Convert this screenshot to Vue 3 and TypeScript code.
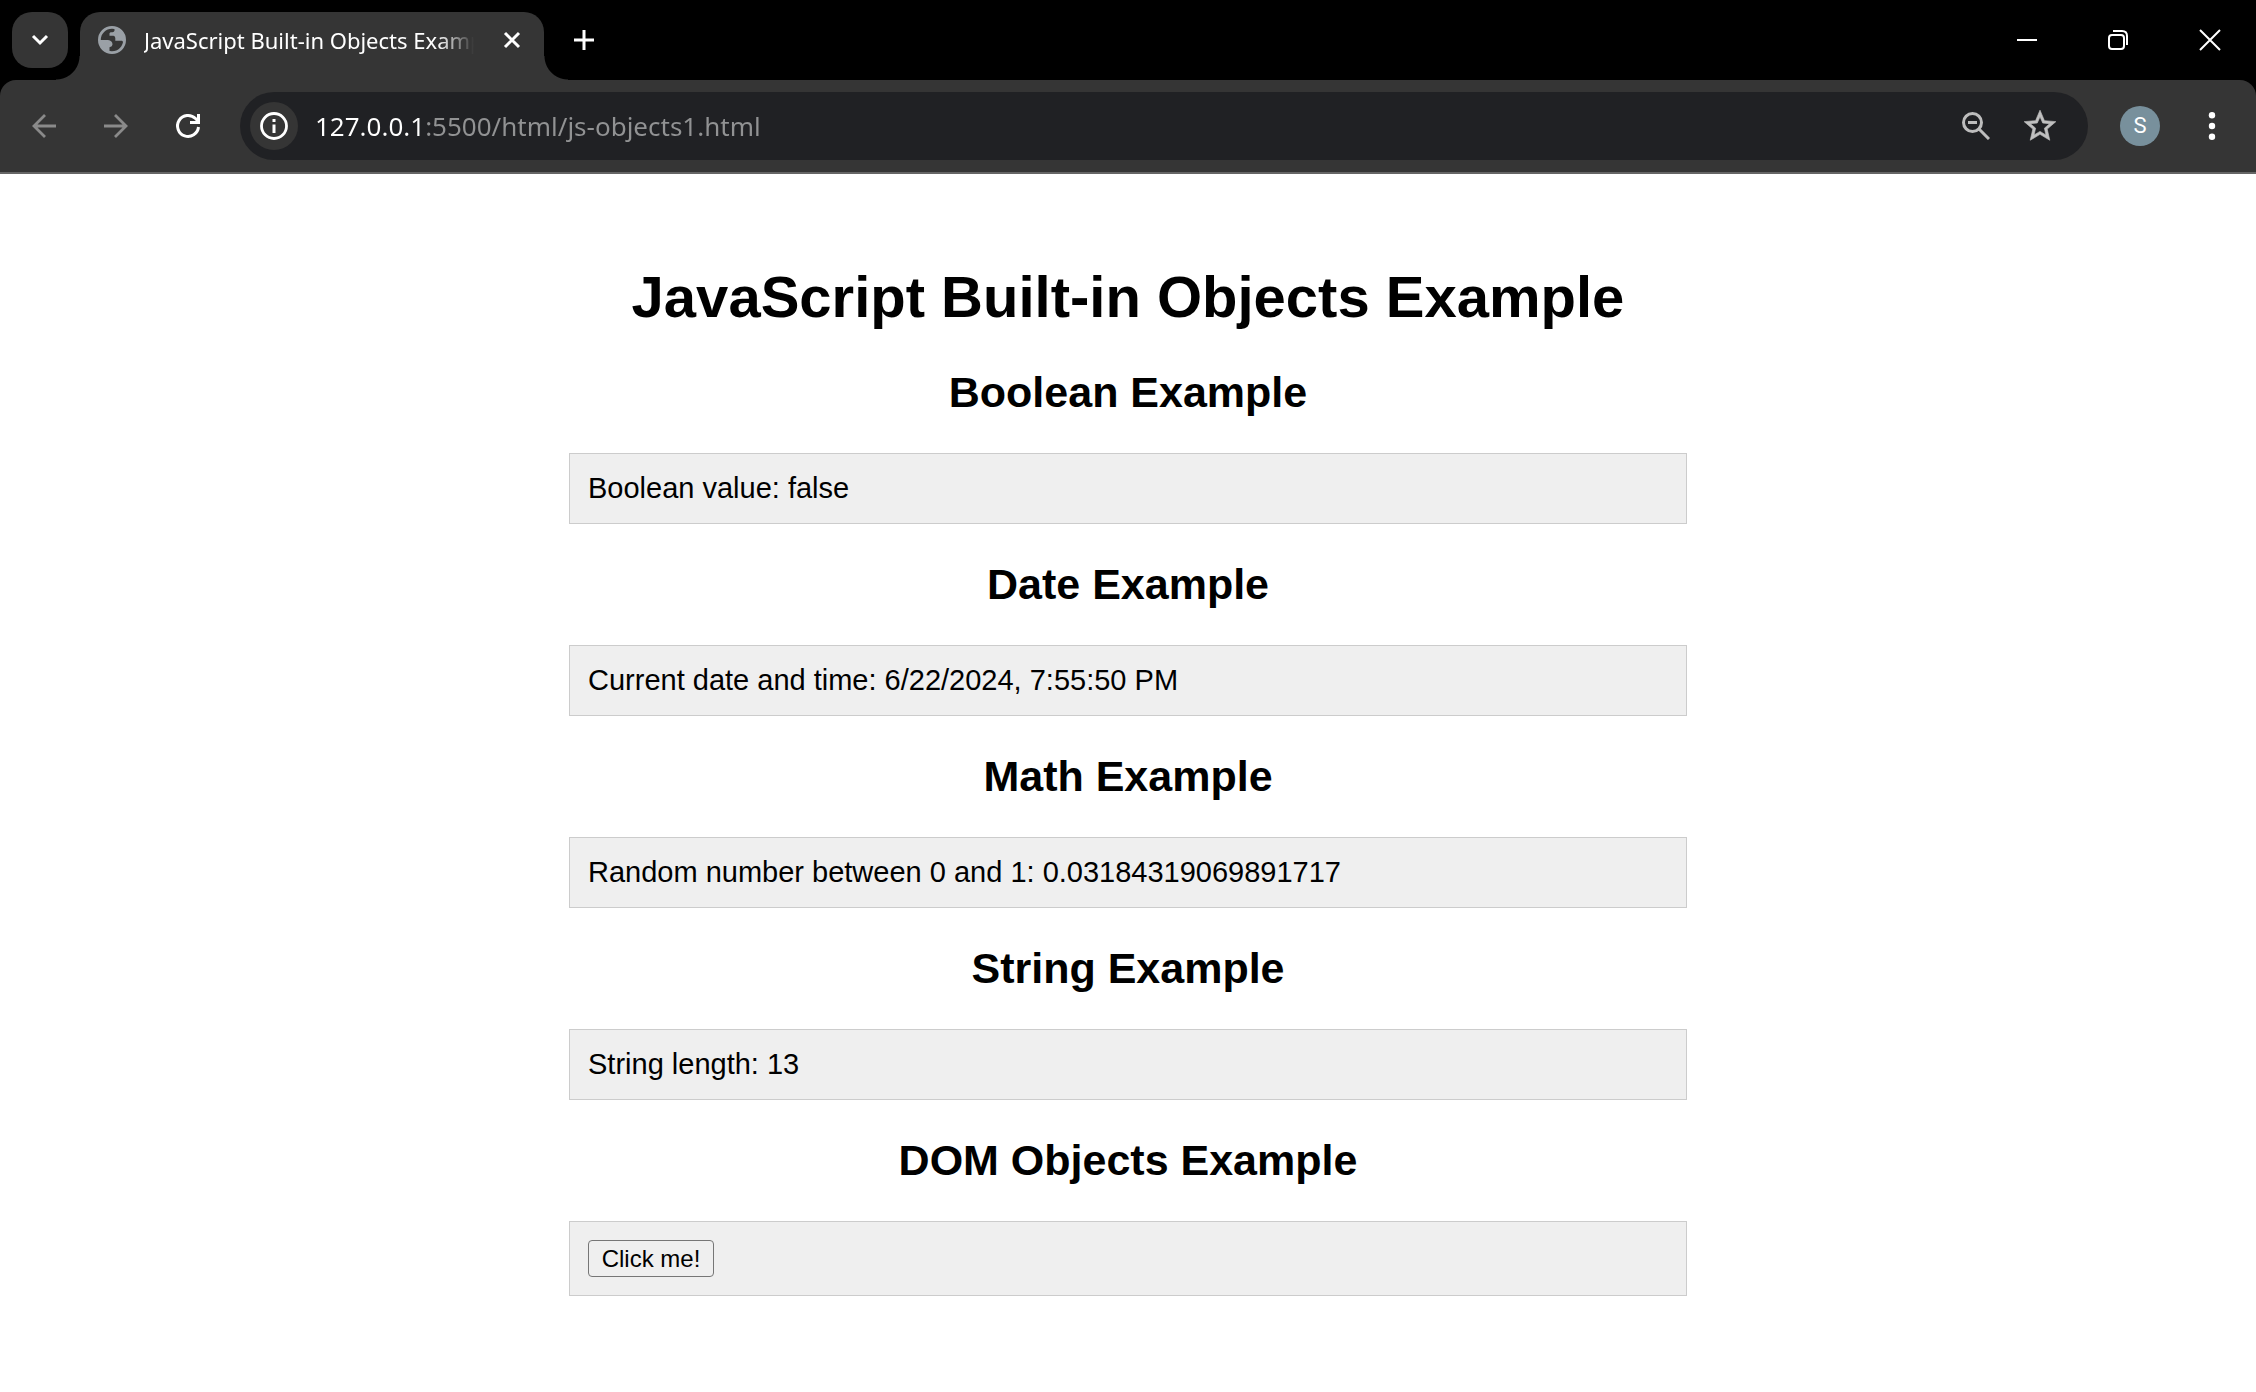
<script setup lang="ts">
import { ref } from 'vue'

interface Example {
  title: string
  text?: string
  action?: string
}

const pageTitle = 'JavaScript Built-in Objects Example'
const address = ref('127.0.0.1:5500/html/js-objects1.html')

const examples: Example[] = [
  { title: 'Boolean Example', text: 'Boolean value: false' },
  { title: 'Date Example', text: 'Current date and time: 6/22/2024, 7:55:50 PM' },
  { title: 'Math Example', text: 'Random number between 0 and 1: 0.03184319069891717' },
  { title: 'String Example', text: 'String length: 13' },
  { title: 'DOM Objects Example', action: 'Click me!' },
]
</script>

<template>
  <div class="browser">
    <header class="tab-strip">
      <button class="tab-search" aria-label="Search tabs">
        <svg width="24" height="24" viewBox="0 0 24 24"><path d="M5 8l7 7 7-7" fill="none" stroke="#fff" stroke-width="3" /></svg>
      </button>
      <div class="tab">
        <svg class="favicon" width="28" height="28" viewBox="0 0 28 28">
          <circle cx="14" cy="14" r="12.6" fill="none" stroke="#9aa0a6" stroke-width="2.8" />
          <path d="M1 14h9q4.500 .5 4.500 4.500q0 2-3 2.700V26.500A13 13 0 0 1 1 14z" fill="#9aa0a6" />
          <path d="M16.500 2v2.700q-.4 1.300-2 1.500h-2l-1 1v2.500h4q1.800 .3 1.800 2.300v2.700h6.700l1 1h2A13 13 0 0 0 16.500 2z" fill="#9aa0a6" />
        </svg>
        <span class="tab-title">{{ pageTitle }}</span>
        <button class="icon-button" aria-label="Close tab">
          <svg width="24" height="24" viewBox="0 0 24 24"><path d="M5 5l14 14M19 5L5 19" stroke="#fff" stroke-width="3" /></svg>
        </button>
      </div>
      <button class="icon-button new-tab" aria-label="New tab">
        <svg width="24" height="24" viewBox="0 0 24 24"><path d="M12 2v20M2 12h20" stroke="#fff" stroke-width="3" /></svg>
      </button>
      <div class="window-controls">
        <button class="window-button" aria-label="Minimize">
          <svg width="24" height="24" viewBox="0 0 24 24"><path d="M3 12h20" stroke="#fff" stroke-width="2" /></svg>
        </button>
        <button class="window-button" aria-label="Restore">
          <svg width="24" height="24" viewBox="0 0 24 24" fill="none" stroke="#fff" stroke-width="2">
            <rect x="3" y="7" width="15" height="14" rx="3" />
            <path d="M7 3h9q5 0 5 5v9" />
          </svg>
        </button>
        <button class="window-button" aria-label="Close">
          <svg width="24" height="24" viewBox="0 0 24 24"><path d="M2 2l20 20M22 2L2 22" stroke="#fff" stroke-width="2" /></svg>
        </button>
      </div>
    </header>

    <nav class="toolbar" aria-label="Browser toolbar">
      <div class="nav-buttons">
        <button class="icon-button" aria-label="Back">
          <svg width="28" height="28" viewBox="0 0 28 28"><path d="M26 14H4M15 3L4 14l11 11" fill="none" stroke="#8a8a8a" stroke-width="2.800" /></svg>
        </button>
        <button class="icon-button" aria-label="Forward">
          <svg width="28" height="28" viewBox="0 0 28 28"><path d="M2 14h22M13 3l11 11-11 11" fill="none" stroke="#8a8a8a" stroke-width="2.800" /></svg>
        </button>
        <button class="icon-button" aria-label="Reload">
          <svg width="28" height="28" viewBox="0 0 28 28">
            <path d="M24.500 15A10.500 10.500 0 1 1 21.500 6.500L24 9M24.500 2v8.500H16" fill="none" stroke="#fff" stroke-width="3" />
          </svg>
        </button>
      </div>
      <div class="address-bar">
        <button class="site-info" aria-label="View site information">
          <svg width="28" height="28" viewBox="0 0 28 28">
            <circle cx="14" cy="14" r="12.500" fill="none" stroke="#fff" stroke-width="2.800" />
            <path d="M14 12.500V21M14 7v3" stroke="#fff" stroke-width="3" />
          </svg>
        </button>
        <input v-model="address" class="address-input" type="text" aria-label="Address" spellcheck="false" />
        <button class="icon-button" aria-label="Zoom">
          <svg width="28" height="28" viewBox="0 0 28 28" fill="none" stroke="#bdbdbd" stroke-width="3">
            <circle cx="10.500" cy="10.500" r="9" />
            <path d="M17 17l10 10M6 10.500h9" />
          </svg>
        </button>
        <button class="icon-button" aria-label="Bookmark this tab">
          <svg width="38" height="38" viewBox="0 0 24 24">
            <path d="M22 9.240l-7.190-.62L12 2 9.190 8.630 2 9.240l5.460 4.730L5.820 21 12 17.270 18.180 21l-1.630-7.030L22 9.240zM12 15.400l-3.760 2.270 1-4.280-3.320-2.880 4.380-.38L12 6.100l1.710 4.040 4.380.38-3.320 2.880 1 4.280L12 15.400z" fill="#c0c0c0" stroke="#c0c0c0" stroke-width=".4" />
          </svg>
        </button>
      </div>
      <button class="avatar" aria-label="Profile">S</button>
      <button class="icon-button" aria-label="Menu">
        <svg width="28" height="28" viewBox="0 0 28 28" fill="#fff">
          <circle cx="14" cy="3.200" r="3.200" /><circle cx="14" cy="14" r="3.200" /><circle cx="14" cy="24.800" r="3.200" />
        </svg>
      </button>
    </nav>

    <main class="page">
      <h1>{{ pageTitle }}</h1>
      <section v-for="example in examples" :key="example.title">
        <h2>{{ example.title }}</h2>
        <div class="output">
          <button v-if="example.action" class="action">{{ example.action }}</button>
          <template v-else>{{ example.text }}</template>
        </div>
      </section>
    </main>
  </div>
</template>

<style>
body {
  margin: 0;
  background: #fff;
}
</style>

<style scoped>
.browser {
  font-family: "Noto Sans", sans-serif;
}

button {
  margin: 0;
  padding: 0;
  border: 0;
  background: none;
}

svg {
  display: block;
  flex: none;
}

.tab-strip {
  display: flex;
  height: 80px;
  box-sizing: border-box;
  padding: 12px 0 0 12px;
  background: #000;
}

.tab-search {
  display: flex;
  align-items: center;
  justify-content: center;
  width: 56px;
  height: 56px;
  border-radius: 20px;
  background: #353535;
}

.icon-button {
  display: flex;
  flex: none;
  align-items: center;
  justify-content: center;
  width: 40px;
  height: 40px;
}

.tab {
  position: relative;
  display: flex;
  align-items: center;
  width: 464px;
  height: 68px;
  box-sizing: border-box;
  margin-left: 12px;
  padding: 0 12px 12px 18px;
  border-radius: 20px 20px 0 0;
  background: #353535;
}

/* Concave feet that join the active tab to the toolbar. */
.tab::before,
.tab::after {
  content: "";
  position: absolute;
  bottom: 0;
  width: 24px;
  height: 24px;
}

.tab::before {
  right: 100%;
  background: radial-gradient(circle at 0 0, transparent 23px, #353535 24px);
}

.tab::after {
  left: 100%;
  background: radial-gradient(circle at 100% 0, transparent 23px, #353535 24px);
}

.tab-title {
  flex: 1;
  min-width: 0;
  margin: 0 18px;
  overflow: hidden;
  color: #fff;
  font-size: 22px;
  line-height: 32px;
  white-space: nowrap;
  mask-image: linear-gradient(to left, transparent, #000 36px);
}

.new-tab {
  margin: 8px 0 0 20px;
}

.window-controls {
  display: flex;
  margin: -12px 0 0 auto;
}

.window-button {
  display: flex;
  align-items: center;
  justify-content: center;
  width: 92px;
  height: 80px;
}

.toolbar {
  position: relative;
  display: flex;
  align-items: center;
  padding: 12px 24px;
  border-bottom: 2px solid #666;
  border-radius: 16px 16px 0 0;
  background: #353535;
}

/* Black strip showing behind the rounded top corners. */
.toolbar::before {
  content: "";
  position: absolute;
  z-index: -1;
  inset: 0 0 50%;
  background: #000;
}

.nav-buttons {
  display: flex;
  gap: 32px;
  margin-right: 32px;
}

.address-bar {
  display: flex;
  flex: 1;
  align-items: center;
  gap: 24px;
  height: 68px;
  box-sizing: border-box;
  padding: 0 28px 0 10px;
  border-radius: 34px;
  background: #202124;
}

.site-info {
  display: flex;
  flex: none;
  align-items: center;
  justify-content: center;
  width: 48px;
  height: 48px;
  border-radius: 50%;
  background: #353535;
}

.address-input {
  flex: 1;
  min-width: 0;
  height: 40px;
  margin-left: -7px;
  padding: 0;
  border: 0;
  outline: 0;
  /* The host is white, the rest of the address grey. */
  background: linear-gradient(to right, #fff 111px, #919293 111px);
  background-clip: text;
  color: transparent;
  font-family: "Noto Sans", sans-serif;
  font-size: 26px;
}

.avatar {
  width: 40px;
  height: 40px;
  margin: 0 32px;
  border-radius: 50%;
  background: #78909c;
  color: #fff;
  font-family: Roboto, sans-serif;
  font-size: 22px;
  line-height: 40px;
}

.page {
  max-width: 1118px;
  margin: 0 auto;
  padding: 90px 18px 36px;
  color: #000;
  font-family: "Liberation Sans", Arial, sans-serif;
  font-size: 29px;
}

h1 {
  margin: 0 0 38px;
  font-size: 58px;
  line-height: 66px;
  text-align: center;
}

h2 {
  margin: 36px 0;
  font-size: 43px;
  line-height: 49px;
  text-align: center;
}

.output {
  padding: 18px;
  border: 1px solid #ccc;
  background: #efefef;
  line-height: 33px;
}

.action {
  display: block;
  min-width: 126px;
  height: 37px;
  padding: 0 12px;
  border: 1px solid #767676;
  border-radius: 4px;
  background: #efefef;
  color: #000;
  font-family: "Liberation Sans", Arial, sans-serif;
  font-size: 24px;
}
</style>
